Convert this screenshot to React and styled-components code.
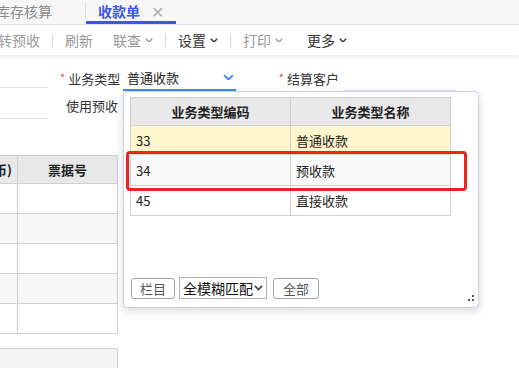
import React from 'react'
import styled, { createGlobalStyle } from 'styled-components'

const GlobalStyle = createGlobalStyle`
html, body {
  margin: 0;
  padding: 0;
}
body {
  font-family: "Noto Sans CJK SC", "Noto Sans", sans-serif;
  font-size: 13px;
  color: #333;
  background: #fff;
  overflow: hidden;
}
`

const Page = styled.div`
position: relative;
width: 519px;
height: 368px;
overflow: hidden;
`

const TabBar = styled.div`
display: flex;
height: 25px;
box-sizing: border-box;
background: #f7f7f8;
border-bottom: 1px solid #e2e2ee;
`

const Tab = styled.div`
display: flex;
align-items: center;
gap: 11px;
height: 24px;
box-sizing: border-box;
padding: ${p => p.$first ? '0 33px 0 0' : '0 12px'};
margin-left: ${p => p.$first ? '-4px' : '0'};
font-size: 14px;
font-weight: ${p => p.$active ? 700 : 400};
color: ${p => p.$active ? '#3d55e8' : '#8a8a8a'};
border-bottom: 3px solid ${p => p.$active ? '#3d55e8' : 'transparent'};
white-space: nowrap;
`

const TabDivider = styled.div`
align-self: center;
width: 1px;
height: 17px;
background: #dcdcdc;
margin-top: -3px;
`

const Close = styled.span`
color: #b0b0b0;
font-weight: 400;
font-size: 16px;
line-height: 1;
`

const Toolbar = styled.div`
position: relative;
z-index: 1;
display: flex;
align-items: center;
height: 30px;
margin-left: -12px;
background: #fff;
box-shadow: 0 2px 4px rgba(0, 0, 0, 0.08);
`

const ToolItem = styled.div`
display: flex;
align-items: center;
gap: 4px;
padding: 0 10px;
margin-left: ${p => p.$push || 0}px;
font-size: 14px;
color: ${p => p.$dark ? '#333' : '#999'};
white-space: nowrap;
`

const ToolSep = styled.div`
width: 1px;
height: 13px;
background: #d5d5d5;
margin: 0 2px;
`

const Chevron = ({ color = 'currentColor', w = 8 }) => (
  <svg width={w} height={w * 0.6} viewBox="0 0 10 6">
    <polyline points="1,1 5,5 9,1" fill="none" stroke={color} strokeWidth="1.8" />
  </svg>
)

const FormArea = styled.div`
padding-top: 10px;
`

const FieldRow = styled.div`
display: flex;
align-items: center;
height: ${p => p.$h}px;
`

const Stub = styled.div`
align-self: flex-start;
width: 48px;
height: ${p => p.$h}px;
box-sizing: border-box;
border-bottom: 1px solid #e3e3e3;
`

const FieldLabel = styled.div`
width: ${p => p.$w}px;
margin-left: ${p => p.$offset}px;
box-sizing: border-box;
padding-right: ${p => p.$pr}px;
text-align: right;
font-size: 13px;
color: #333;
white-space: nowrap;
`

const Star = styled.span`
color: #e5484d;
font-size: 11px;
margin-right: 3px;
vertical-align: 2px;
`

const SelectBox = styled.div`
align-self: stretch;
display: flex;
align-items: center;
justify-content: space-between;
width: 113px;
box-sizing: border-box;
padding: 0 2px 0 4px;
border-bottom: 2px solid #3b8cf5;
font-size: 13px;
color: #222;
`

const TextInput = styled.div`
align-self: stretch;
width: 113px;
border-bottom: 1px solid #e6e6e6;
`

const Grid = styled.table`
border-collapse: collapse;
table-layout: fixed;
font-size: 13px;
`

const LeftGrid = styled(Grid)`
width: 181px;
margin-left: -63px;
margin-top: 36px;
`

const HeadCell = styled.th`
height: 28px;
padding: 0 ${p => p.$pr || 0}px 0 0;
box-sizing: border-box;
background: #e8e8e8;
border: 1px solid #d0d0d0;
font-weight: 700;
color: #222;
text-align: ${p => p.$align || 'center'};
white-space: nowrap;
overflow: hidden;
`

const BodyRow = styled.tr`
td {
  background: ${p => p.$bg || '#fff'};
}
`

const Cell = styled.td`
height: ${p => p.$h || 29}px;
padding: 0 0 0 5px;
box-sizing: border-box;
border: 1px solid #d0d0d0;
color: #222;
white-space: nowrap;
`

const BottomBox = styled.div`
width: 181px;
height: 30px;
margin-left: -63px;
margin-top: 14px;
box-sizing: border-box;
background: #f3f3f3;
border: 1px solid #d5d5d5;
`

const Popup = styled.div`
position: absolute;
left: 123px;
top: 91px;
width: 356px;
height: 217px;
box-sizing: border-box;
display: flex;
flex-direction: column;
padding: 5px 6px 8px 6px;
background: #fff;
border: 1px solid #c9d3e3;
border-radius: 4px;
box-shadow: 0 3px 8px rgba(0, 0, 0, 0.15);
z-index: 2;
`

const PopGrid = styled(Grid)`
width: 320px;
`

const PopFooter = styled.div`
margin-top: auto;
display: flex;
align-items: center;
`

const FootButton = styled.button`
width: ${p => p.$w}px;
height: 21px;
margin-left: ${p => p.$ml}px;
padding: 0;
background: #fff;
border: 1px solid #9ea4ac;
border-radius: 3px;
font-family: inherit;
font-size: 13px;
color: #555;
`

const MatchSelect = styled.div`
display: flex;
align-items: center;
justify-content: space-between;
width: 88px;
height: 22px;
margin-left: 4px;
box-sizing: border-box;
padding: 0 3px 0 3px;
border: 1px solid #b5b5b5;
font-size: 14px;
color: #111;
`

const Grip = styled.svg`
position: absolute;
right: 4px;
bottom: 5px;
`

const Highlight = styled.div`
position: absolute;
left: 126px;
top: 151px;
width: 341px;
height: 40px;
box-sizing: border-box;
border: 3px solid #f0211f;
border-radius: 4px;
z-index: 3;
pointer-events: none;
`

const leftRows = ['#fff', '#f7f7f7', '#fff', '#f7f7f7', '#fff']

const types = [
  { code: '33', name: '普通收款', bg: '#fef6cd', h: 29 },
  { code: '34', name: '预收款', bg: '#f9f9f9', h: 31 },
  { code: '45', name: '直接收款', bg: '#fff', h: 30 },
]

export default function App() {
  return (
    <Page>
      <GlobalStyle />
      <TabBar>
        <Tab $first>库存核算</Tab>
        <TabDivider />
        <Tab $active>收款单<Close>✕</Close></Tab>
      </TabBar>
      <Toolbar>
        <ToolItem>转预收</ToolItem>
        <ToolSep />
        <ToolItem>刷新</ToolItem>
        <ToolItem>联查<Chevron /></ToolItem>
        <ToolSep />
        <ToolItem $dark>设置<Chevron /></ToolItem>
        <ToolSep />
        <ToolItem>打印<Chevron /></ToolItem>
        <ToolItem $dark $push={4}>更多<Chevron /></ToolItem>
      </Toolbar>
      <FormArea>
        <FieldRow $h={26}>
          <Stub $h={23} />
          <FieldLabel $w={63} $offset={12} $pr={5}><Star>*</Star>业务类型</FieldLabel>
          <SelectBox>普通收款<Chevron color="#3b8cf5" w={11} /></SelectBox>
          <FieldLabel $w={65} $offset={42} $pr={4}><Star>*</Star>结算客户</FieldLabel>
          <TextInput />
        </FieldRow>
        <FieldRow $h={28}>
          <Stub $h={28} />
          <FieldLabel $w={63} $offset={12} $pr={5}>使用预收</FieldLabel>
        </FieldRow>
      </FormArea>
      <LeftGrid>
        <colgroup>
          <col style={{ width: 80 }} />
          <col style={{ width: 100 }} />
        </colgroup>
        <thead>
          <tr>
            <HeadCell $align="right" $pr={5}>金额(本币)</HeadCell>
            <HeadCell>票据号</HeadCell>
          </tr>
        </thead>
        <tbody>
          {leftRows.map((bg, i) => (
            <BodyRow key={i} $bg={bg}>
              <Cell $h={30} />
              <Cell $h={30} />
            </BodyRow>
          ))}
        </tbody>
      </LeftGrid>
      <BottomBox />

      <Popup>
        <PopGrid>
          <colgroup>
            <col style={{ width: 160 }} />
            <col style={{ width: 160 }} />
          </colgroup>
          <thead>
            <tr>
              <HeadCell>业务类型编码</HeadCell>
              <HeadCell>业务类型名称</HeadCell>
            </tr>
          </thead>
          <tbody>
            {types.map(t => (
              <BodyRow key={t.code} $bg={t.bg}>
                <Cell $h={t.h}>{t.code}</Cell>
                <Cell $h={t.h}>{t.name}</Cell>
              </BodyRow>
            ))}
          </tbody>
        </PopGrid>
        <PopFooter>
          <FootButton $w={44} $ml={1}>栏目</FootButton>
          <MatchSelect>全模糊匹配<Chevron color="#444" w={9} /></MatchSelect>
          <FootButton $w={46} $ml={6}>全部</FootButton>
        </PopFooter>
        <Grip width="7" height="7" viewBox="0 0 7 7">
          <rect x="5" y="0" width="2" height="2" fill="#555" />
          <rect x="1" y="4" width="2" height="2" fill="#555" />
          <rect x="5" y="4" width="2" height="2" fill="#555" />
        </Grip>
      </Popup>
      <Highlight />
    </Page>
  )
}
